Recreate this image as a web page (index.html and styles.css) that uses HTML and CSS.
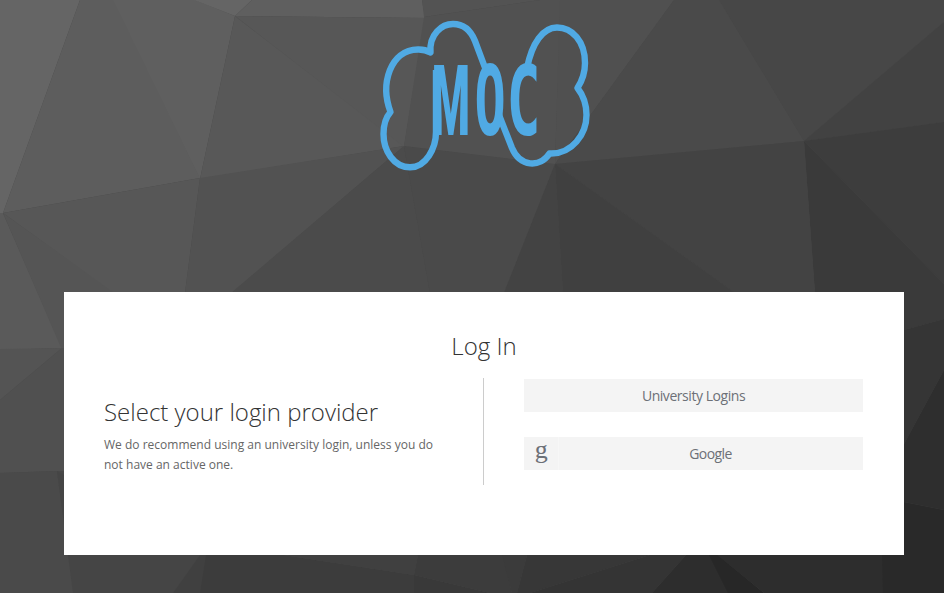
FILE: index.html
```html
<!DOCTYPE html>
<html lang="en">
<head>
<meta charset="utf-8">
<title>Log In</title>
<link rel="stylesheet" href="styles.css">
</head>
<body>
<svg class="backdrop" viewBox="0 0 944 593" preserveAspectRatio="none" aria-hidden="true">
  <rect width="944" height="593" fill="#484848"/>
  <path fill="#656565" d="M0 0H80L3 213H0Z"/>
  <path fill="#5d5d5d" d="M80 0H114L200 178L3 213Z"/>
  <path fill="#5f5f5f" d="M113 0H195L235 16L200 179Z"/>
  <path fill="#656565" d="M194 0H252L235 16Z"/>
  <path fill="#5f5f5f" d="M252 0H422L425 18L235 16Z"/>
  <path fill="#535353" d="M422 0H540L424 17Z"/>
  <path fill="#585858" d="M235 16L404 146L200 179Z"/>
  <path fill="#575757" d="M235 16L425 18L404 147Z"/>
  <path fill="#5a5a5a" d="M0 213H3L62 348L0 350Z"/>
  <path fill="#555" d="M3 213L114 292V350H62Z"/>
  <path fill="#575757" d="M3 213L200 178L185 293H114Z"/>
  <path fill="#525252" d="M200 178L404 146L232 293H185Z"/>
  <path fill="#4b4b4b" d="M404 146L430 293H231Z"/>
  <path fill="#4a4a4a" d="M404 146L555 164L504 293H430Z"/>
  <path fill="#515151" d="M540 0H561L555 164L404 146L424 17Z"/>
  <path fill="#505050" d="M560 0H674L555 164Z"/>
  <path fill="#4a4a4a" d="M674 0H720L804 141L555 164Z"/>
  <path fill="#474747" d="M719 0H944V22L804 141Z"/>
  <path fill="#424242" d="M944 22V122L804 141Z"/>
  <path fill="#3d3d3d" d="M944 122V284L804 141Z"/>
  <path fill="#3a3a3a" d="M804 141L944 284V319L904 330L815 293Z"/>
  <path fill="#434343" d="M555 164L804 141L815 293H735Z"/>
  <path fill="#404040" d="M555 164L735 293H563Z"/>
  <path fill="#434343" d="M555 164L563 293H504Z"/>
  <path fill="#545454" d="M0 349L62 348L0 400Z"/>
  <path fill="#505050" d="M0 400L62 348H65V471H57L0 473Z"/>
  <path fill="#4a4a4a" d="M0 473L57 471L74 593H0Z"/>
  <path fill="#454545" d="M57 471L200 555L173 593H73Z"/>
  <path fill="#404040" d="M200 555H207L201 593H173Z"/>
  <path fill="#3c3c3c" d="M206 555H283L414 575V593H200Z"/>
  <path fill="#404040" d="M283 555H418L414 575Z"/>
  <path fill="#393939" d="M414 575L490 593H414Z"/>
  <path fill="#3c3c3c" d="M418 555H503L512 593H490L414 575Z"/>
  <path fill="#3b3b3b" d="M502 555H527L517 593H512Z"/>
  <path fill="#373737" d="M527 555H650L530 593H517Z"/>
  <path fill="#343434" d="M650 555H686L652 593H530Z"/>
  <path fill="#2d2d2d" d="M686 555H710L729 593H652Z"/>
  <path fill="#272727" d="M709 555H718L764 593H728Z"/>
  <path fill="#2d2d2d" d="M717 555H884V593H764Z"/>
  <path fill="#353535" d="M904 330L944 319V370L904 444Z"/>
  <path fill="#2e2e2e" d="M904 444L944 370V510L904 502Z"/>
  <path fill="#292929" d="M881 502H904L944 510V593H883Z"/>
</svg>
<main class="page">
  <header class="brand">
    <svg class="logo" viewBox="0 0 230 170" role="img" aria-label="MOC">
      <g class="cloud">
        <path d="M66 60V122C66 138 56 157.300 40 157.300C24 157.300 13.500 141 13.500 124C13.500 114 17 106 20.500 102C10 74 20 40 48 39.500Q55 39.300 60.500 42.500C59 24 72 14 83 14C94 14 101 21 105 31L115.500 59"/>
        <path d="M157 58C162 33 173 17.500 187 17.500C202 17.500 215 31 215 53C215 63 212 71 207.500 78C213 85 216.500 95 216.500 105C216.500 124 202 144.500 179.500 143.500C170 158 150 157 142 138L129 105"/>
      </g>
      <g class="letters">
        <text class="wide" transform="translate(80.800 124.500) scale(.445 1)">M</text>
        <text transform="translate(120 124.500) scale(.54 1)">O</text>
        <text transform="translate(153.500 124.500) scale(.59 1)">C</text>
      </g>
    </svg>
  </header>
  <section class="card">
    <h1 class="title">Log In</h1>
    <div class="columns">
      <div class="intro">
        <h2 class="subtitle">Select your login provider</h2>
        <p class="hint">We do recommend using an university login, unless you do not have an active one.</p>
      </div>
      <div class="providers">
        <a class="provider"><span class="label">University Logins</span></a>
        <a class="provider google"><span class="icon">g</span><span class="label">Google</span></a>
      </div>
    </div>
  </section>
</main>
</body>
</html>
```
FILE: styles.css
```css
* { box-sizing: border-box; }

body {
  margin: 0;
  height: 593px;
  overflow: hidden;
  background: #484848;
  font-family: "Open Sans", sans-serif;
}

.backdrop {
  position: absolute;
  inset: 0;
  width: 100%;
  height: 100%;
  z-index: -1;
}

.page { padding: 10px 40px 0 64px; }

.brand { height: 282px; padding-left: 306px; }
.logo { display: block; width: 230px; height: 170px; }

.cloud {
  fill: none;
  stroke: #50aae4;
  stroke-width: 6.4;
  stroke-linejoin: round;
}

.letters {
  font: 700 96px "DejaVu Sans Mono", monospace;
  fill: #50aae4;
  text-anchor: middle;
}
.letters .wide { font: 900 98px Roboto, sans-serif; }

.card {
  height: 263px;
  padding: 37px 41px 0 40px;
  background: #fff;
}

.title, .subtitle {
  margin: 0;
  color: #333;
  font-size: 24px;
  font-weight: 300;
  line-height: 34px;
}
.title { padding-left: 1px; text-align: center; }

.columns {
  display: flex;
  height: 107px;
  margin-top: 15px;
}

.intro {
  width: 380px;
  padding: 17px 40px 0 0;
  border-right: 1px solid #ccc;
}

.hint {
  margin: 6px 0 0;
  color: #666;
  font-size: 12px;
  line-height: 20px;
  letter-spacing: .01px;
}

.providers {
  flex: 1;
  display: flex;
  flex-direction: column;
  gap: 25px;
  padding: 1px 0 0 40px;
}

.provider {
  display: flex;
  height: 33px;
  background: #f4f4f4;
  color: #6c7077;
  font-size: 14px;
  line-height: 33px;
  letter-spacing: -.45px;
}
.label { flex: 1; text-align: center; }
.google .label { padding-right: 1px; letter-spacing: -.6px; }

.icon {
  width: 35px;
  border-right: 1px solid #f7f7f7;
  font: 26px/25px "Liberation Serif", serif;
  text-align: center;
}
```
